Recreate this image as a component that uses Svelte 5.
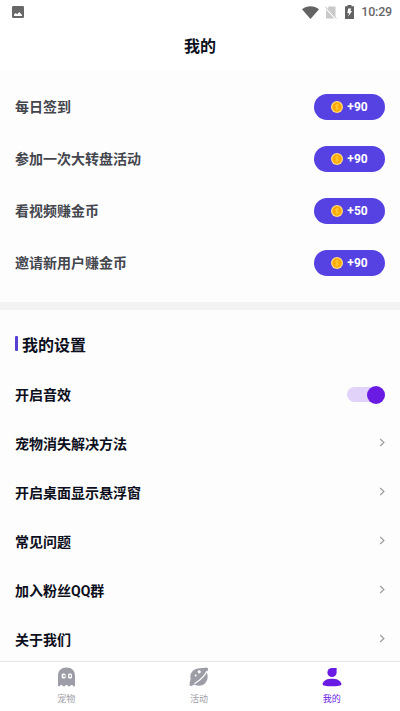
<script>
  const tasks = [
    { name: '每日签到', coins: 90 },
    { name: '参加一次大转盘活动', coins: 90 },
    { name: '看视频赚金币', coins: 50 },
    { name: '邀请新用户赚金币', coins: 90 }
  ];

  const links = ['宠物消失解决方法', '开启桌面显示悬浮窗', '常见问题', '加入粉丝QQ群', '关于我们'];

  let soundOn = $state(true);
  let activeTab = $state('mine');
</script>

<div class="screen">
  <div class="status-bar">
    <svg class="picture" width="12" height="12" viewBox="0 0 12 12">
      <rect width="12" height="12" rx="1.2" fill="#686868" />
      <path d="M2 10V8.5L3.7 7l1.5 1.3L7.3 6l2.7 3v1z" fill="#fff" />
    </svg>
    <div class="status-icons">
      <svg width="17" height="13" viewBox="0 0 17 13">
        <path d="M0 3.2C4.8-.8 12.2-.8 17 3.2L8.5 13z" fill="#636363" />
      </svg>
      <svg width="12" height="13" viewBox="0 0 12 13">
        <path d="M4 .5h6.500v10.500L2.3 2.200zM1 3.500l8.300 9H1z" fill="#c9c9c9" />
        <path d="M.4.8l11 11.700" stroke="#c2c2c2" stroke-width="1" />
      </svg>
      <svg width="9" height="14" viewBox="0 0 9 14">
        <path d="M0 1.300h2.500V0h4v1.300H9V14H0z" fill="#636363" />
        <path d="M3.200 3.500h3L5.400 6h1.700L3.300 11.500 4 8H2.300z" fill="#fff" />
      </svg>
      <span class="time">10:29</span>
    </div>
  </div>

  <header>我的</header>

  <main>
    <section class="tasks">
      {#each tasks as task}
        <div class="task">
          <span>{task.name}</span>
          <button class="reward" type="button">
            <svg width="12" height="12" viewBox="0 0 12 12">
              <circle cx="6" cy="6" r="6" fill="#ffdc7c" />
              <circle cx="6" cy="6" r="4.700" fill="#ffa800" />
              <path
                d="M7.700 4.300C7.100 3.500 4.500 3.500 4.500 4.900c0 1.300 3.100.9 3.100 2.300 0 1.400-2.700 1.400-3.300.5M6 2.800v6.400"
                fill="none"
                stroke="#ffd34d"
                stroke-width=".8"
              />
            </svg>
            +{task.coins}
          </button>
        </div>
      {/each}
    </section>

    <section class="settings">
      <h2>我的设置</h2>
      <div class="row">
        <span>开启音效</span>
        <button
          class="switch"
          class:on={soundOn}
          type="button"
          aria-label="开启音效"
          onclick={() => (soundOn = !soundOn)}
        >
          <i></i>
        </button>
      </div>
      {#each links as link}
        <div class="row">
          <span>{link}</span>
          <svg class="arrow" width="6" height="9" viewBox="0 0 6 9">
            <path d="M1.200 1l3.700 3.500L1.200 8" fill="none" stroke="#9c9ca3" stroke-width="1.200" />
          </svg>
        </div>
      {/each}
    </section>
  </main>

  <nav>
    <button type="button" class:active={activeTab === 'pet'} onclick={() => (activeTab = 'pet')}>
      <svg width="19" height="20" viewBox="0 0 19 20">
        <path
          d="M1 9C1 3.600 4.300.6 9.500.6S18 3.600 18 9v10.300h-1.700c-.5-1.700-2.700-1.700-3.200 0h-2c-.5-1.700-2.700-1.700-3.200 0h-2c-.5-1.700-2.700-1.700-3.200 0H1z"
          fill="currentColor"
        />
        <rect x="4.600" y="6.600" width="4" height="5" rx="1.500" fill="#fff" />
        <rect x="11" y="6.600" width="4" height="5" rx="1.500" fill="#fff" />
        <path d="M6.200 8h1.700v1.700H6.200zM12.300 8H14v1.700h-1.700z" fill="currentColor" />
      </svg>
      宠物
    </button>
    <button type="button" class:active={activeTab === 'event'} onclick={() => (activeTab = 'event')}>
      <svg width="20" height="20" viewBox="0 0 20 20">
        <circle cx="10" cy="10" r="8.700" fill="currentColor" />
        <path
          d="M11 1.400C15 .8 18.800.4 19.100 1.400c.4 1.300-1.500 4.800-5.600 9.200-4.600 4.800-10.500 9.300-12.400 8.300-.8-.6-.5-4 .5-7z"
          fill="currentColor"
        />
        <path d="M18 4C16 8.200 11 13.400 5.500 16.700" fill="none" stroke="#fff" stroke-width="1.200" />
        <circle cx="10.200" cy="4.800" r="1.600" fill="#fff" />
        <circle cx="6.700" cy="8.600" r="1" fill="#fff" />
      </svg>
      活动
    </button>
    <button type="button" class:active={activeTab === 'mine'} onclick={() => (activeTab = 'mine')}>
      <svg width="20" height="20" viewBox="0 0 20 20">
        <path d="M10 .9h4.600v4.600A4.600 4.600 0 1 1 10 .9z" fill="currentColor" />
        <path
          d="M.7 16.300C2 13 5.500 11.700 10 11.700s8 1.300 9.300 4.600c.8 2.500-2.500 3-9.300 3s-10.100-.5-9.300-3z"
          fill="currentColor"
        />
      </svg>
      我的
    </button>
  </nav>
</div>

<style>
  :global(body) {
    margin: 0;
    overflow: hidden;
  }

  .screen {
    display: flex;
    flex-direction: column;
    height: 711px;
    background: #fdfdfd;
    color: #0c0f20;
    font-family: Roboto, 'Noto Sans CJK SC', sans-serif;
  }

  button {
    border: none;
    padding: 0;
    font-family: inherit;
    cursor: pointer;
  }

  svg {
    display: block;
  }

  .status-bar {
    flex: none;
    display: flex;
    align-items: center;
    justify-content: space-between;
    height: 24px;
    box-sizing: border-box;
    padding: 0 8px 0 12px;
    background: #fff;
  }

  .status-icons {
    display: flex;
    align-items: center;
    gap: 7px;
  }

  .status-icons svg:nth-child(2) {
    margin-left: -1px;
    margin-right: 1px;
  }

  .time {
    font-size: 12.5px;
    font-weight: 500;
    line-height: 24px;
    letter-spacing: -0.2px;
    color: #686868;
  }

  header {
    flex: none;
    height: 46px;
    line-height: 46px;
    background: #fff;
    text-align: center;
    font-size: 16px;
    font-weight: 700;
  }

  main {
    flex: 1;
    min-height: 0;
    overflow: hidden;
  }

  .tasks {
    padding: 11px 15px 13px;
    border-bottom: 8px solid #f3f3f3;
    color: #44464e;
  }

  .task,
  .row {
    display: flex;
    align-items: center;
    justify-content: space-between;
    font-size: 14px;
    font-weight: 700;
  }

  .task span,
  .row span {
    padding-bottom: 2px;
  }

  .task {
    height: 52px;
  }

  .reward {
    display: flex;
    align-items: center;
    justify-content: center;
    gap: 4px;
    width: 71px;
    height: 26px;
    border-radius: 13px;
    background: #5641e3;
    color: #fff;
    font-size: 12px;
    font-weight: 700;
  }

  .settings {
    padding: 7px 15px 0;
  }

  h2 {
    display: flex;
    align-items: center;
    gap: 4px;
    height: 53px;
    margin: 0;
    font-size: 16px;
    font-weight: 700;
  }

  h2::before {
    content: '';
    width: 3px;
    height: 15px;
    border-radius: 1px;
    background: #5641d3;
  }

  .row {
    height: 49px;
  }

  .switch {
    display: flex;
    align-items: center;
    width: 38px;
    height: 15px;
    border-radius: 8px;
    background: #dedee2;
  }

  .switch i {
    width: 18px;
    height: 18px;
    border-radius: 50%;
    background: #fff;
    flex: none;
  }

  .switch.on {
    justify-content: flex-end;
    background: #e0d2f9;
  }

  .switch.on i {
    background: #691be3;
  }

  .arrow {
    margin-bottom: 2px;
  }

  nav {
    flex: none;
    display: flex;
    height: 50px;
    box-sizing: border-box;
    padding-right: 2px;
    border-top: 1px solid #e6e6e6;
    background: #fff;
  }

  nav button {
    flex: 1;
    display: flex;
    flex-direction: column;
    align-items: center;
    gap: 5px;
    padding-top: 5px;
    background: none;
    color: #9d9da8;
    font-size: 9px;
    line-height: 14px;
  }

  nav button.active {
    color: #691be3;
  }
</style>
